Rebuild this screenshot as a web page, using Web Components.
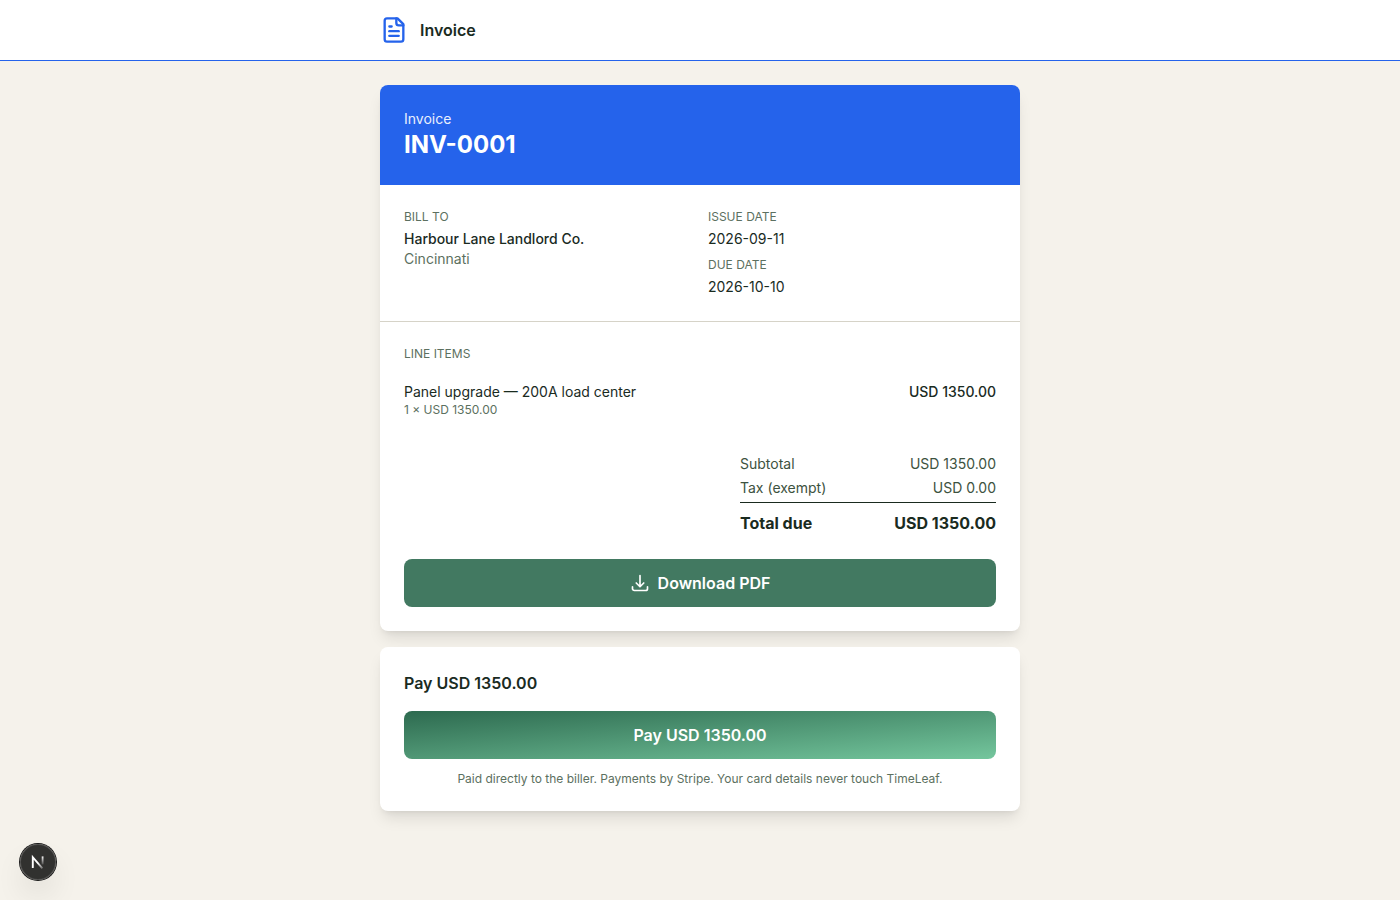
<!DOCTYPE html>
<html lang="en">
<head>
<meta charset="utf-8">
<meta name="viewport" content="width=device-width, initial-scale=1">
<title>Invoice INV-0001</title>
<style>
  :root {
    --ink: #1a2b1f;
    --ink-soft: #3d5240;
    --muted: #5c7060;
    --line: #d6d3c8;
    --page: #f5f2eb;
    --brand: #2563eb;
    --green: #2d6a4f;
    --mint: #74c69d;
  }
  body {
    margin: 0;
    min-height: 100vh;
    background: var(--page);
    color: var(--ink);
    font: 14px/20px Inter, "Liberation Sans", sans-serif;
    -webkit-font-smoothing: antialiased;
  }
</style>
</head>
<body>
<invoice-page></invoice-page>
<dev-badge></dev-badge>

<script>
const define = (name, markup) => {
  const template = document.createElement('template');
  template.innerHTML = markup;
  customElements.define(name, class extends HTMLElement {
    constructor() {
      super();
      this.attachShadow({ mode: 'open' }).append(template.content.cloneNode(true));
    }
  });
};

define('app-header', `
  <style>
    :host { display: block; background: #fff; border-bottom: 1px solid var(--brand); }
    header { display: flex; align-items: center; gap: 12px; max-width: 640px; margin: 0 auto; padding: 16px; }
    svg { display: block; width: 28px; height: 28px; color: var(--brand); }
    h1 { margin: 0; font-size: 16px; line-height: 24px; font-weight: 600; }
  </style>
  <header>
    <svg viewBox="0 0 24 24" fill="none" stroke="currentColor" stroke-width="2" stroke-linecap="round" stroke-linejoin="round" aria-hidden="true">
      <path d="M15 2H6a2 2 0 0 0-2 2v16a2 2 0 0 0 2 2h12a2 2 0 0 0 2-2V7Z"/>
      <path d="M14 2v4a2 2 0 0 0 2 2h4"/>
      <path d="M10 9H8"/><path d="M16 13H8"/><path d="M16 17H8"/>
    </svg>
    <h1><slot></slot></h1>
  </header>`);

define('surface-card', `
  <style>
    :host {
      display: block; overflow: hidden; border-radius: 8px; background: #fff;
      box-shadow: 0 10px 15px -3px rgb(0 0 0 / .1), 0 4px 6px -4px rgb(0 0 0 / .1);
    }
  </style>
  <slot></slot>`);

define('invoice-banner', `
  <style>
    :host { display: block; padding: 24px; background: var(--brand); color: #fff; }
    p, h2 { margin: 0; }
    p { opacity: .9; }
    h2 { font-size: 24px; line-height: 32px; font-weight: 700; }
  </style>
  <p>Invoice</p>
  <h2><slot></slot></h2>`);

define('field-label', `
  <style>
    :host { display: block; font-size: 12px; line-height: 16px; color: var(--muted); text-transform: uppercase; }
  </style>
  <slot></slot>`);

define('invoice-parties', `
  <style>
    :host { display: grid; grid-template-columns: 1fr 1fr; gap: 16px; padding: 24px; border-bottom: 1px solid var(--line); }
    p { margin: 0; }
    .value { margin-top: 4px; }
    .name { font-weight: 500; }
    .place { color: var(--muted); }
    .due { margin-top: 8px; }
  </style>
  <section>
    <field-label>Bill to</field-label>
    <p class="value name">Harbour Lane Landlord Co.</p>
    <p class="place">Cincinnati</p>
  </section>
  <section>
    <field-label>Issue date</field-label>
    <p class="value">2026-09-11</p>
    <field-label class="due">Due date</field-label>
    <p class="value">2026-10-10</p>
  </section>`);

define('line-items', `
  <style>
    :host { display: block; }
    table { width: 100%; margin-top: 12px; border-collapse: collapse; }
    td { padding: 8px 0; vertical-align: top; }
    small { display: block; font-size: 12px; line-height: 16px; color: var(--muted); }
    .amount { text-align: right; font-weight: 500; }
  </style>
  <field-label>Line items</field-label>
  <table aria-label="Line items">
    <tbody>
      <tr>
        <td>Panel upgrade — 200A load center<small>1 × USD 1350.00</small></td>
        <td class="amount">USD 1350.00</td>
      </tr>
    </tbody>
  </table>`);

define('invoice-totals', `
  <style>
    :host { display: block; max-width: 256px; margin: 28px 0 24px auto; color: var(--ink-soft); }
    dl { display: grid; gap: 4px; margin: 0; }
    div { display: flex; justify-content: space-between; }
    dd { margin: 0; }
    .total {
      padding-top: 8px; border-top: 1px solid var(--ink);
      color: var(--ink); font-size: 16px; line-height: 24px; font-weight: 700;
    }
  </style>
  <dl>
    <div><dt>Subtotal</dt><dd>USD 1350.00</dd></div>
    <div><dt>Tax (exempt)</dt><dd>USD 0.00</dd></div>
    <div class="total"><dt>Total due</dt><dd>USD 1350.00</dd></div>
  </dl>`);

define('action-button', `
  <style>
    :host { display: block; }
    button {
      display: flex; align-items: center; justify-content: center; gap: 8px;
      width: 100%; min-height: 48px; margin: 0; padding: 12px 16px;
      border: 0; border-radius: 8px; background: #427961; color: #fff;
      font: inherit; font-size: 16px; line-height: 24px; font-weight: 600; cursor: pointer;
    }
    :host([primary]) button { background: linear-gradient(to bottom right, var(--green), var(--mint)); }
    ::slotted(svg) { display: block; width: 20px; height: 20px; }
  </style>
  <button type="button"><slot name="icon"></slot><slot></slot></button>`);

define('payment-panel', `
  <style>
    :host { display: block; padding: 24px; }
    h2 { margin: 0 0 16px; font-size: 16px; line-height: 24px; font-weight: 600; }
    p { margin: 12px 0 0; font-size: 12px; line-height: 16px; color: var(--muted); text-align: center; }
  </style>
  <h2>Pay USD 1350.00</h2>
  <action-button primary>Pay USD 1350.00</action-button>
  <p>Paid directly to the biller. Payments by Stripe. Your card details never touch TimeLeaf.</p>`);

define('invoice-page', `
  <style>
    :host { display: block; }
    main { display: grid; gap: 16px; max-width: 640px; margin: 0 auto; padding: 24px 0; }
    .body { padding: 24px; }
  </style>
  <app-header>Invoice</app-header>
  <main>
    <surface-card>
      <invoice-banner>INV-0001</invoice-banner>
      <invoice-parties></invoice-parties>
      <div class="body">
        <line-items></line-items>
        <invoice-totals></invoice-totals>
        <action-button>
          <svg slot="icon" viewBox="0 0 24 24" fill="none" stroke="currentColor" stroke-width="2" stroke-linecap="round" stroke-linejoin="round" aria-hidden="true">
            <path d="M3 16.5v2.25A2.25 2.25 0 0 0 5.25 21h13.5A2.25 2.25 0 0 0 21 18.75V16.5M16.5 12 12 16.5m0 0L7.5 12m4.5 4.5V3"/>
          </svg>
          Download PDF
        </action-button>
      </div>
    </surface-card>
    <surface-card><payment-panel></payment-panel></surface-card>
  </main>`);

define('dev-badge', `
  <style>
    :host { position: fixed; left: 20px; bottom: 20px; display: block; }
    button {
      display: grid; place-items: center; width: 36px; height: 36px; padding: 0;
      border: 0; border-radius: 50%; background: rgb(0 0 0 / .8); cursor: pointer;
      box-shadow: 0 0 0 1px #171717, inset 0 0 0 1px rgb(255 255 255 / .14), 0 16px 32px -8px rgb(0 0 0 / .24);
    }
    svg { display: block; width: 36px; height: 36px; }
  </style>
  <button type="button" aria-label="Open developer tools">
    <svg viewBox="0 0 36 36" fill="none" aria-hidden="true">
      <defs>
        <linearGradient id="stem" x1="0" y1="12" x2="0" y2="22" gradientUnits="userSpaceOnUse">
          <stop stop-color="#fff"/><stop offset="1" stop-color="#fff" stop-opacity="0"/>
        </linearGradient>
        <linearGradient id="slash" x1="18" y1="19" x2="23" y2="25" gradientUnits="userSpaceOnUse">
          <stop stop-color="#fff"/><stop offset="1" stop-color="#fff" stop-opacity=".2"/>
        </linearGradient>
      </defs>
      <path d="M12.8 24V13.2L22.4 24.4" stroke="url(#slash)" stroke-width="1.9"/>
      <path d="M22.6 12.4V20.5" stroke="url(#stem)" stroke-width="1.8"/>
    </svg>
  </button>`);
</script>
</body>
</html>
